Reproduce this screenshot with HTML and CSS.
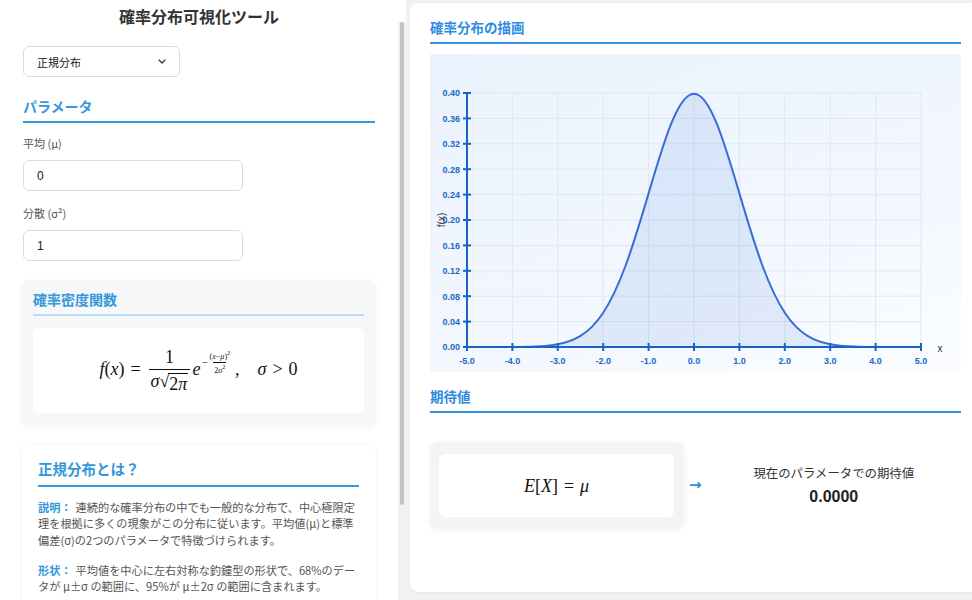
FILE: index.html
```html
<!DOCTYPE html>
<html lang="ja">
<head>
<meta charset="utf-8">
<title>確率分布可視化ツール</title>
<link rel="stylesheet" href="styles.css">
</head>
<body>
<div class="app">
  <aside class="sidebar">
    <div class="sidebar-content">
      <h1 class="title">確率分布可視化ツール</h1>

      <div class="select">
        <span>正規分布</span>
        <svg class="chev" width="8" height="5" viewBox="0 0 8 5"><path d="M1 1 L4 4 L7 1" fill="none" stroke="#333" stroke-width="1.2" stroke-linecap="round" stroke-linejoin="round"/></svg>
      </div>

      <h2 class="group-title">パラメータ</h2>

      <label class="field-label">平均 (μ)</label>
      <input class="field-input" type="text" value="0">

      <label class="field-label second">分散 (σ²)</label>
      <input class="field-input" type="text" value="1">

      <section class="pdf-card">
        <h3 class="pdf-title">確率密度関数</h3>
        <div class="formula-box">
          <span class="math">
            <span class="mi">f</span>(<span class="mi">x</span>)<span class="rel">=</span><span class="frac"><span class="num">1</span><span class="den"><span class="mi">σ</span><span class="sqrt"><span class="radic">√</span><span class="radicand">2<span class="mi">π</span></span></span></span></span><span class="mi">e</span><span class="sup">−<span class="frac tiny"><span class="num">(<span class="mi">x</span>−<span class="mi">μ</span>)<span class="sup2">2</span></span><span class="den">2<span class="mi">σ</span><span class="sup2">2</span></span></span></span><span class="punct">,</span><span class="mi sig">σ</span><span class="rel">&gt;</span>0
          </span>
        </div>
      </section>

      <section class="info-card">
        <h3 class="info-title">正規分布とは？</h3>
        <p class="info-text"><strong class="tag">説明：</strong>連続的な確率分布の中でも一般的な分布で、中心極限定理を根拠に多くの現象がこの分布に従います。平均値(μ)と標準偏差(σ)の2つのパラメータで特徴づけられます。</p>
        <p class="info-text"><strong class="tag">形状：</strong>平均値を中心に左右対称な釣鐘型の形状で、68%のデータが μ±σ の範囲に、95%が μ±2σ の範囲に含まれます。</p>
      </section>
    </div>
    <div class="scrollbar"><div class="scroll-track"><div class="scroll-thumb"></div></div></div>
  </aside>

  <main class="main">
    <div class="card">
      <h2 class="section-title">確率分布の描画</h2>
      <div class="chart">
        <svg width="531" height="318" viewBox="0 0 531 318">
          <g class="grid" stroke="#dfe7f2" stroke-width="1">
            <line x1="82.4" y1="39" x2="82.4" y2="293"/>
            <line x1="127.8" y1="39" x2="127.8" y2="293"/>
            <line x1="173.2" y1="39" x2="173.2" y2="293"/>
            <line x1="218.6" y1="39" x2="218.6" y2="293"/>
            <line x1="264" y1="39" x2="264" y2="293"/>
            <line x1="309.4" y1="39" x2="309.4" y2="293"/>
            <line x1="354.8" y1="39" x2="354.8" y2="293"/>
            <line x1="400.2" y1="39" x2="400.2" y2="293"/>
            <line x1="445.6" y1="39" x2="445.6" y2="293"/>
            <line x1="491" y1="39" x2="491" y2="293"/>
            <line x1="37" y1="267.6" x2="491" y2="267.6"/>
            <line x1="37" y1="242.2" x2="491" y2="242.2"/>
            <line x1="37" y1="216.8" x2="491" y2="216.8"/>
            <line x1="37" y1="191.4" x2="491" y2="191.4"/>
            <line x1="37" y1="166" x2="491" y2="166"/>
            <line x1="37" y1="140.6" x2="491" y2="140.6"/>
            <line x1="37" y1="115.2" x2="491" y2="115.2"/>
            <line x1="37" y1="89.8" x2="491" y2="89.8"/>
            <line x1="37" y1="64.4" x2="491" y2="64.4"/>
            <line x1="37" y1="39" x2="491" y2="39"/>
          </g>
          <path fill="rgba(70,120,220,0.13)" stroke="none" d="M37,293 C44.57,293 52.13,293 59.7,292.99 C67.27,292.98 74.83,292.97 82.4,292.91 C89.97,292.85 97.53,292.77 105.1,292.45 C112.67,292.13 120.23,291.6 127.8,290.19 C135.37,288.78 142.93,286.51 150.5,281.87 C158.07,277.23 165.63,270.15 173.2,258.72 C180.77,247.29 188.33,231.32 195.9,210.76 C203.47,190.2 211.03,164.96 218.6,139.35 C226.17,113.74 233.73,88.07 241.3,69.44 C248.87,50.81 256.43,39.67 264,39.67 C271.57,39.67 279.13,50.81 286.7,69.44 C294.27,88.07 301.83,113.74 309.4,139.35 C316.97,164.96 324.53,190.2 332.1,210.76 C339.67,231.32 347.23,247.29 354.8,258.72 C362.37,270.15 369.93,277.23 377.5,281.87 C385.07,286.51 392.63,288.78 400.2,290.19 C407.77,291.6 415.33,292.13 422.9,292.45 C430.47,292.77 438.03,292.85 445.6,292.91 C453.17,292.97 460.73,292.98 468.3,292.99 C475.87,293 483.43,293 491,293 Z"/>
          <path fill="none" stroke="#3a6cd6" stroke-width="2" d="M37,293 C44.57,293 52.13,293 59.7,292.99 C67.27,292.98 74.83,292.97 82.4,292.91 C89.97,292.85 97.53,292.77 105.1,292.45 C112.67,292.13 120.23,291.6 127.8,290.19 C135.37,288.78 142.93,286.51 150.5,281.87 C158.07,277.23 165.63,270.15 173.2,258.72 C180.77,247.29 188.33,231.32 195.9,210.76 C203.47,190.2 211.03,164.96 218.6,139.35 C226.17,113.74 233.73,88.07 241.3,69.44 C248.87,50.81 256.43,39.67 264,39.67 C271.57,39.67 279.13,50.81 286.7,69.44 C294.27,88.07 301.83,113.74 309.4,139.35 C316.97,164.96 324.53,190.2 332.1,210.76 C339.67,231.32 347.23,247.29 354.8,258.72 C362.37,270.15 369.93,277.23 377.5,281.87 C385.07,286.51 392.63,288.78 400.2,290.19 C407.77,291.6 415.33,292.13 422.9,292.45 C430.47,292.77 438.03,292.85 445.6,292.91 C453.17,292.97 460.73,292.98 468.3,292.99 C475.87,293 483.43,293 491,293"/>
          <g class="axis" stroke="#1763c4" stroke-width="2">
            <line x1="37" y1="38" x2="37" y2="294"/>
            <line x1="36" y1="293" x2="492" y2="293"/>
            <line x1="33" y1="293" x2="41" y2="293"/>
            <line x1="33" y1="267.6" x2="41" y2="267.6"/>
            <line x1="33" y1="242.2" x2="41" y2="242.2"/>
            <line x1="33" y1="216.8" x2="41" y2="216.8"/>
            <line x1="33" y1="191.4" x2="41" y2="191.4"/>
            <line x1="33" y1="166" x2="41" y2="166"/>
            <line x1="33" y1="140.6" x2="41" y2="140.6"/>
            <line x1="33" y1="115.2" x2="41" y2="115.2"/>
            <line x1="33" y1="89.8" x2="41" y2="89.8"/>
            <line x1="33" y1="64.4" x2="41" y2="64.4"/>
            <line x1="33" y1="39" x2="41" y2="39"/>
            <line x1="37" y1="289" x2="37" y2="297"/>
            <line x1="82.4" y1="289" x2="82.4" y2="297"/>
            <line x1="127.8" y1="289" x2="127.8" y2="297"/>
            <line x1="173.2" y1="289" x2="173.2" y2="297"/>
            <line x1="218.6" y1="289" x2="218.6" y2="297"/>
            <line x1="264" y1="289" x2="264" y2="297"/>
            <line x1="309.4" y1="289" x2="309.4" y2="297"/>
            <line x1="354.8" y1="289" x2="354.8" y2="297"/>
            <line x1="400.2" y1="289" x2="400.2" y2="297"/>
            <line x1="445.6" y1="289" x2="445.6" y2="297"/>
            <line x1="491" y1="289" x2="491" y2="297"/>
          </g>
          <g class="ylabels" text-anchor="end">
            <text x="30" y="296.3">0.00</text>
            <text x="30" y="270.9">0.04</text>
            <text x="30" y="245.5">0.08</text>
            <text x="30" y="220.1">0.12</text>
            <text x="30" y="194.7">0.16</text>
            <text x="30" y="169.3">0.20</text>
            <text x="30" y="143.9">0.24</text>
            <text x="30" y="118.5">0.28</text>
            <text x="30" y="93.1">0.32</text>
            <text x="30" y="67.7">0.36</text>
            <text x="30" y="42.3">0.40</text>
          </g>
          <g class="xlabels" text-anchor="middle">
            <text x="37" y="309.5">-5.0</text>
            <text x="82.4" y="309.5">-4.0</text>
            <text x="127.8" y="309.5">-3.0</text>
            <text x="173.2" y="309.5">-2.0</text>
            <text x="218.6" y="309.5">-1.0</text>
            <text x="264" y="309.5">0.0</text>
            <text x="309.4" y="309.5">1.0</text>
            <text x="354.8" y="309.5">2.0</text>
            <text x="400.2" y="309.5">3.0</text>
            <text x="445.6" y="309.5">4.0</text>
            <text x="491" y="309.5">5.0</text>
          </g>
          <text class="axis-name" x="510" y="297.5" text-anchor="middle">x</text>
          <text class="axis-name" transform="translate(15,166) rotate(-90)" text-anchor="middle">f(x)</text>
        </svg>
      </div>

      <h2 class="section-title second">期待値</h2>
      <div class="expect-row">
        <div class="expect-card">
          <div class="expect-box">
            <span class="math big"><span class="mi">E</span>[<span class="mi">X</span>]<span class="rel">=</span><span class="mi">μ</span></span>
          </div>
        </div>
        <span class="arrow">→</span>
        <div class="expect-value">
          <div class="expect-label">現在のパラメータでの期待値</div>
          <div class="expect-number">0.0000</div>
        </div>
      </div>
    </div>
  </main>
</div>
</body>
</html>
```

FILE: styles.css
```css
* { box-sizing: border-box; }

html, body {
  margin: 0;
  padding: 0;
  width: 972px;
  height: 600px;
  overflow: hidden;
}

body {
  background: #f2f2f2;
  font-family: "Noto Sans CJK JP", "Liberation Sans", sans-serif;
  color: #333;
}

.app {
  display: grid;
  grid-template-columns: 406px 1fr;
  height: 600px;
}

/* ---------- sidebar ---------- */
.sidebar {
  display: flex;
  background: #fff;
  height: 600px;
  overflow: hidden;
}

.sidebar-content {
  width: 398px;
  flex: none;
  padding: 0 23px;
}

.scrollbar {
  width: 8px;
  flex: none;
  display: flex;
  flex-direction: column;
  padding-top: 22px;
  background: #fff;
}

.scroll-track {
  flex: 1;
  background: #f1f1f1;
  padding: 0 2px;
}

.scroll-thumb {
  height: 483px;
  background: #c3c3c3;
  border-radius: 2px;
}

.title {
  margin: 5px 0 0;
  font-size: 16px;
  line-height: 22px;
  font-weight: 700;
  text-align: center;
  color: #333;
}

.select {
  margin-top: 19px;
  width: 157px;
  height: 31px;
  border: 1px solid #dcdcdc;
  border-radius: 6px;
  padding: 0 13px 0 13px;
  display: flex;
  align-items: center;
  justify-content: space-between;
  font-size: 11px;
  color: #222;
  background: #fff;
}

.chev { display: block; }

.group-title {
  margin: 19px 0 0;
  font-size: 14px;
  line-height: 20px;
  font-weight: 700;
  color: #3498db;
  padding-bottom: 5px;
  border-bottom: 2px solid #3498db;
}

.field-label {
  display: block;
  margin-top: 12px;
  font-size: 11px;
  line-height: 16px;
  color: #555;
}

.field-label.second { margin-top: 14px; }

.field-input {
  display: block;
  margin-top: 9px;
  width: 220px;
  height: 31px;
  border: 1px solid #dcdcdc;
  border-radius: 6px;
  padding: 0 13px;
  font-family: "Liberation Sans", "Noto Sans CJK JP", sans-serif;
  font-size: 12px;
  color: #222;
  background: #fff;
  outline: none;
}

.pdf-card {
  margin: 19px -1px 0;
  padding: 10px 12px 12px 11px;
  background: #f5f7f9;
  border-radius: 8px;
  box-shadow: 0 2px 6px rgba(0, 0, 0, 0.05);
}

.pdf-title {
  margin: 0;
  font-size: 14px;
  line-height: 18px;
  font-weight: 700;
  color: #3498db;
  padding-bottom: 6px;
  border-bottom: 2px solid #b9dbf7;
}

.formula-box {
  margin-top: 12px;
  height: 85px;
  background: #fff;
  border-radius: 6px;
  display: flex;
  align-items: center;
  justify-content: center;
}

/* ---------- math ---------- */
.math {
  font-family: "Liberation Serif", "DejaVu Serif", serif;
  font-size: 18px;
  color: #111;
  white-space: nowrap;
  line-height: 1;
}

.math .mi { font-style: italic; }

.math .rel { margin: 0 6px; }

.frac {
  display: inline-flex;
  flex-direction: column;
  align-items: center;
  vertical-align: middle;
  margin: 0 2px;
}

.frac .num {
  padding: 0 2px 3px;
  line-height: 1;
}

.frac .den {
  border-top: 1px solid #111;
  padding: 2px 2px 0;
  line-height: 1;
}

.sqrt {
  display: inline-flex;
  align-items: flex-start;
}

.radic {
  font-style: normal;
  margin-right: -1px;
  line-height: 1;
}

.radicand {
  border-top: 1px solid #111;
  margin-top: 1px;
  padding: 1px 1px 0 1px;
  line-height: 1;
}

.sup {
  display: inline-flex;
  align-items: center;
  font-size: 11px;
  vertical-align: 9px;
  margin-left: 1px;
}

.frac.tiny {
  font-size: 8px;
  margin: 0 0 0 1px;
}

.frac.tiny .num { padding: 0 1px 1px; }
.frac.tiny .den { padding: 1px 1px 0; }

.sup2 {
  font-size: 6px;
  vertical-align: 4px;
}

.punct { margin: 0 18px 0 4px; }

.math.big { font-size: 18px; }

/* ---------- info card ---------- */
.info-card {
  margin: 20px -1px 0;
  padding: 13px 17px 0 16px;
  min-height: 253px;
  background: #fff;
  border-radius: 8px;
  box-shadow: 0 1px 4px rgba(0, 0, 0, 0.08);
}

.info-title {
  margin: 0;
  font-size: 14.5px;
  line-height: 22px;
  font-weight: 700;
  color: #3498db;
  padding-bottom: 5px;
  border-bottom: 2px solid #3498db;
}

.info-text {
  margin: 11.5px 0 0;
  font-size: 11.2px;
  line-height: 16.5px;
  color: #555;
  text-spacing-trim: space-all;
}

.info-text + .info-text { margin-top: 13.5px; }

.info-text .tag {
  display: inline-block;
  color: #3498db;
  font-weight: 700;
  margin-right: 4px;
}

/* ---------- main ---------- */
.main {
  padding: 3px 0 8px 4px;
}

.card {
  height: 589px;
  background: #fff;
  border-radius: 8px 0 0 8px;
  padding: 15px 11px 0 20px;
  box-shadow: 0 1px 3px rgba(0, 0, 0, 0.06);
}

.section-title {
  margin: 0;
  font-size: 13.5px;
  line-height: 18px;
  font-weight: 700;
  color: #2d8ce0;
  padding-bottom: 6px;
  border-bottom: 2px solid #3492e0;
}

.section-title.second { margin-top: 15px; }

.chart {
  margin-top: 10px;
  height: 318px;
  background: linear-gradient(160deg, #eaf2fd 0%, #f2f7fe 55%, #fafcff 100%);
  border-radius: 2px;
}

.chart svg { display: block; }

.ylabels text, .xlabels text {
  font-family: "Liberation Sans", "DejaVu Sans", sans-serif;
  font-size: 9px;
  font-weight: 700;
  fill: #2068c8;
}

.axis-name {
  font-family: "Liberation Sans", "DejaVu Sans", sans-serif;
  font-size: 10px;
  fill: #333;
}

.expect-row {
  margin-top: 29px;
  display: flex;
  align-items: center;
}

.expect-card {
  width: 254px;
  height: 86px;
  flex: none;
  padding: 12px 10px 11px 9px;
  background: #f3f4f6;
  border-radius: 8px;
  box-shadow: 0 2px 6px rgba(0, 0, 0, 0.06);
}

.expect-box {
  height: 100%;
  background: #fff;
  border-radius: 6px;
  display: flex;
  align-items: center;
  justify-content: center;
}

.arrow {
  margin-left: 5px;
  font-family: "DejaVu Sans", sans-serif;
  font-size: 15px;
  font-weight: 700;
  color: #2d8ce0;
  line-height: 1;
}

.expect-value {
  flex: 1;
  margin-left: 5px;
  text-align: center;
}

.expect-label {
  font-size: 12.4px;
  line-height: 18px;
  color: #333;
}

.expect-number {
  margin-top: 5px;
  font-family: "Liberation Sans", "Noto Sans CJK JP", sans-serif;
  font-size: 16px;
  line-height: 20px;
  font-weight: 700;
  color: #222;
}
```
